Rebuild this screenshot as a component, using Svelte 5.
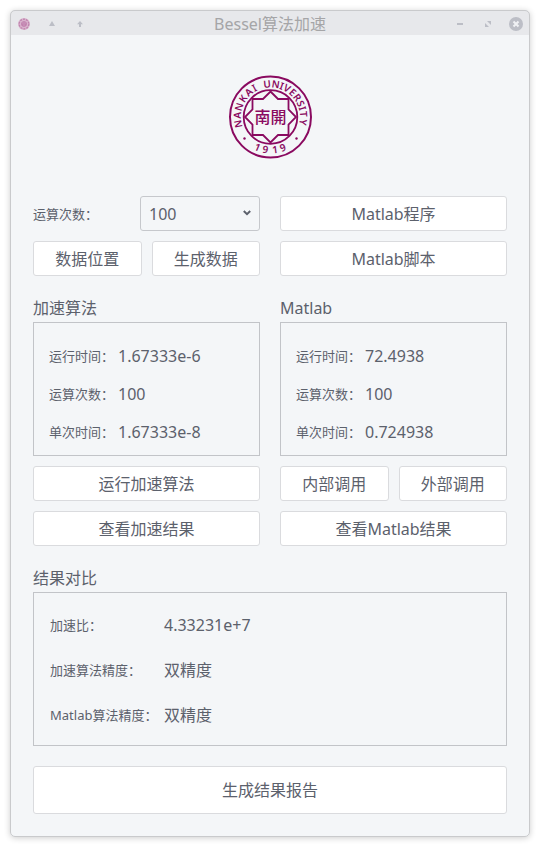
<script>
  let count = $state('100');
  const fast = [
    ['运行时间：', '1.67333e-6'],
    ['运算次数：', '100'],
    ['单次时间：', '1.67333e-8'],
  ];
  const matlab = [
    ['运行时间：', '72.4938'],
    ['运算次数：', '100'],
    ['单次时间：', '0.724938'],
  ];
  const compare = [
    ['加速比：', '4.33231e+7'],
    ['加速算法精度：', '双精度'],
    ['Matlab算法精度：', '双精度'],
  ];
  // Letters round the emblem, each with its angle from the top.
  const name = [
    ['N', -102], ['A', -87], ['N', -72], ['K', -56], ['A', -41], ['I', -29],
    ['U', -6], ['N', 9], ['I', 20], ['V', 30], ['E', 42], ['R', 54],
    ['S', 66], ['I', 75], ['T', 85], ['Y', 99],
  ];
  // Digits along the bottom, each with its angle from the foot.
  const year = [
    ['1', 23], ['9', 9], ['1', -8], ['9', -22],
  ];
</script>

{#snippet readings(rows)}
  {#each rows as [name, value]}
    <div class="row"><dt>{name}</dt><dd>{value}</dd></div>
  {/each}
{/snippet}

<div class="window">
  <header>
    <div class="side">
      <button class="tool" aria-label="窗口菜单">
        <svg width="12" height="12" viewBox="0 0 12 12">
          <circle cx="6" cy="6" r="6" fill="#d9b3cd" />
          <circle cx="6" cy="6" r="4.8" fill="none" stroke="#c084ae" stroke-width="1.2" stroke-dasharray="2 1" />
          <circle cx="6" cy="6" r="2.8" fill="#bd7aa9" />
          <path d="M4 5h4M4.500 7h3" stroke="#d9b2cd" stroke-width=".7" />
        </svg>
      </button>
      <button class="tool" aria-label="卷起">
        <svg width="12" height="12" viewBox="0 0 12 12"><path d="M6 3 9 8H3z" fill="#bcbec6" /></svg>
      </button>
      <button class="tool" aria-label="置顶">
        <svg width="12" height="12" viewBox="0 0 12 12"><path d="M6 3 9 6.200H7V9H5V6.200H3z" fill="#bcbec6" /></svg>
      </button>
    </div>
    <h1>Bessel算法加速</h1>
    <div class="side">
      <button class="tool" aria-label="最小化">
        <svg width="12" height="12" viewBox="0 0 12 12"><path d="M3 5h6v2H3z" fill="#bcbec6" /></svg>
      </button>
      <button class="tool" aria-label="最大化">
        <svg width="12" height="12" viewBox="0 0 12 12"><path d="M5 3h4v4zM3 5l4 4H3z" fill="#bcbec6" /></svg>
      </button>
      <button class="tool" aria-label="关闭">
        <svg width="14" height="14" viewBox="0 0 14 14">
          <circle cx="7" cy="7" r="7" fill="#bcbec6" />
          <path d="M4.500 4.500l5 5m0-5l-5 5" stroke="#f0f1f4" stroke-width="2" />
        </svg>
      </button>
    </div>
  </header>

  <main>
    <svg class="logo" width="84" height="84" viewBox="0 0 84 84" role="img" aria-label="Nankai University 1919">
      <g fill="none" stroke="#8a0a60">
        <circle cx="42.500" cy="42" r="40.500" stroke-width="2" />
        <circle cx="42.500" cy="42" r="26.800" stroke-width="1.800" />
        <path
          stroke-width="1.800"
          d="M42.500 16.500 50 24H60.500V34.500L68 42 60.500 49.500V60H50L42.500 67.500 35 60H24.500V49.500L17 42 24.500 34.500V24H35z"
        />
      </g>
      <g fill="#8a0a60">
        <circle cx="16.500" cy="63.500" r="1.200" />
        <circle cx="68.500" cy="63.500" r="1.200" />
        {#each name as [letter, angle]}
          <text class="ring-text" x="42.500" y="12.500" transform="rotate({angle} 42.5 42)">{letter}</text>
        {/each}
        {#each year as [digit, angle]}
          <text class="ring-text" x="42.500" y="78.500" transform="rotate({angle} 42.5 42)">{digit}</text>
        {/each}
        <text class="seal" x="42.500" y="48">南開</text>
      </g>
    </svg>

    <div class="columns">
      <div class="pair">
        <label for="count">运算次数：</label>
        <div class="picker">
          <select id="count" bind:value={count}>
            <option>100</option>
            <option>1000</option>
            <option>10000</option>
          </select>
          <svg width="8" height="6" viewBox="0 0 8 6"><path d="M.8 1 4 4.200 7.200 1" fill="none" stroke="#5c616c" stroke-width="2" /></svg>
        </div>
      </div>
      <button>Matlab程序</button>
      <div class="pair">
        <button>数据位置</button>
        <button>生成数据</button>
      </div>
      <button>Matlab脚本</button>
    </div>

    <div class="columns">
      <section>
        <h2>加速算法</h2>
        <dl>{@render readings(fast)}</dl>
        <button>运行加速算法</button>
        <button>查看加速结果</button>
      </section>
      <section>
        <h2>Matlab</h2>
        <dl>{@render readings(matlab)}</dl>
        <div class="pair">
          <button>内部调用</button>
          <button>外部调用</button>
        </div>
        <button>查看Matlab结果</button>
      </section>
    </div>

    <section>
      <h2>结果对比</h2>
      <dl class="compare">{@render readings(compare)}</dl>
    </section>
    <button class="report">生成结果报告</button>
  </main>
</div>

<style>
  :global(body) {
    background: #fff;
  }
  .window {
    margin: 10px;
    overflow: hidden;
    border-radius: 5px;
    outline: 1px solid #c9cacc;
    outline-offset: -1px;
    background: #f4f6f8;
    box-shadow: 0 1px 6px rgba(0, 0, 0, 0.2);
    color: #5c616c;
    font: 16px/24px 'Noto Sans', 'Noto Sans CJK SC', sans-serif;
  }
  header {
    display: flex;
    justify-content: space-between;
    align-items: center;
    height: 25px;
    padding-top: 2px;
    box-sizing: border-box;
    background: #e7e8eb;
  }
  .side {
    display: flex;
  }
  h1,
  h2 {
    margin: 0;
    font-size: 16px;
    font-weight: 400;
  }
  h1 {
    color: #a5a5a7;
  }
  h2 {
    margin: 10px 0 -8px;
  }
  button {
    height: 35px;
    padding: 0;
    border: 1px solid #dadbde;
    border-radius: 3px;
    background: #fff;
    color: inherit;
    font: inherit;
  }
  button.tool {
    display: flex;
    align-items: center;
    justify-content: center;
    width: 28px;
    height: 24px;
    border: 0;
    background: none;
  }
  main {
    display: flex;
    flex-direction: column;
    gap: 10px;
    padding: 40px 23px 23px;
  }
  .logo {
    align-self: center;
    margin-bottom: 27px;
  }
  .ring-text {
    font: 600 10px 'Noto Sans', sans-serif;
    text-anchor: middle;
  }
  .seal {
    font: 500 16px 'Noto Sans CJK TC', sans-serif;
    text-anchor: middle;
  }
  .columns {
    display: grid;
    grid-template-columns: 1fr 1fr;
    gap: 10px 20px;
  }
  .pair {
    display: flex;
    align-items: center;
    justify-content: space-between;
    gap: 10px;
  }
  .pair button {
    flex: 1;
  }
  label,
  dt {
    font-size: 13px;
  }
  .picker {
    position: relative;
    width: 120px;
  }
  select {
    display: block;
    width: 100%;
    height: 35px;
    padding: 0 8px;
    appearance: none;
    border: 1px solid #c6c8cc;
    border-radius: 3px;
    background: #f4f6f8;
    color: inherit;
    font: inherit;
  }
  .picker svg {
    position: absolute;
    top: 14px;
    right: 9px;
    pointer-events: none;
  }
  section {
    display: flex;
    flex-direction: column;
    gap: 10px;
  }
  dl {
    margin: 0;
    padding: 14px 15px 4px;
    border: 1px solid #c2c4c8;
  }
  .row {
    display: flex;
    align-items: center;
    gap: 4px;
    height: 38px;
  }
  dt {
    white-space: nowrap;
  }
  dd {
    margin: 0;
  }
  .compare {
    padding: 9px 16px 8px;
  }
  .compare .row {
    height: 45px;
  }
  .compare dt {
    width: 110px;
  }
  .report {
    height: 48px;
    margin-top: 10px;
  }
</style>
